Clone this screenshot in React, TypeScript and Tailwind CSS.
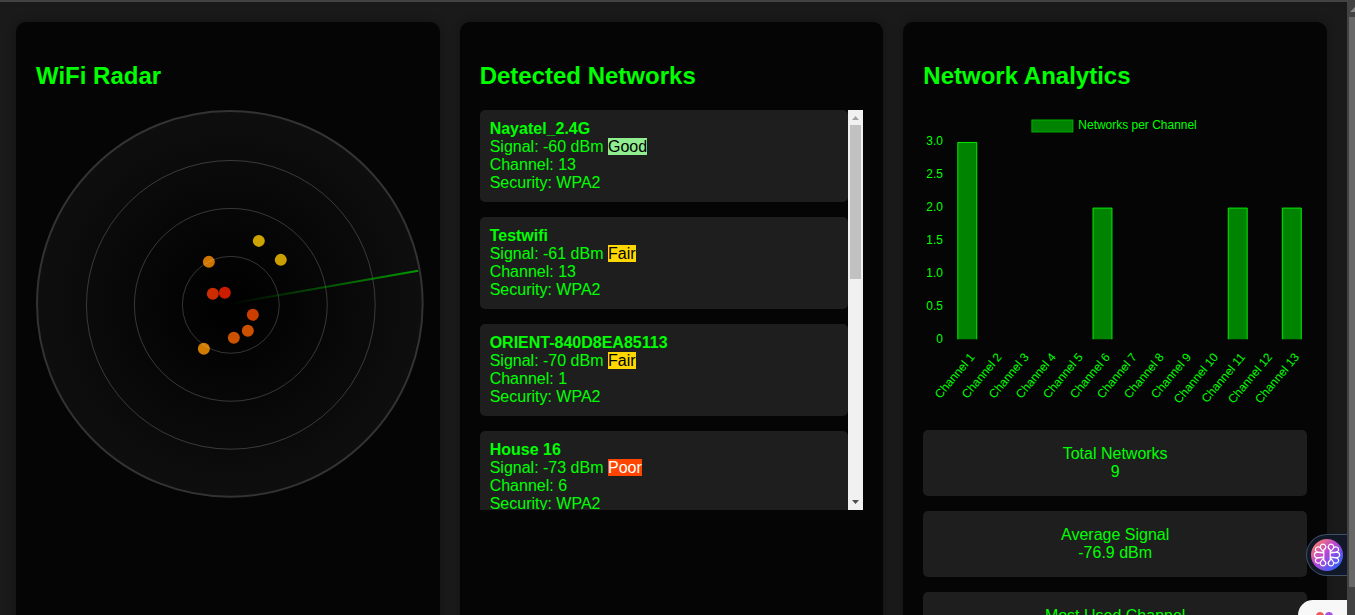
import React from "react";

type Network = {
  name: string;
  signal: number;
  quality: "Good" | "Fair" | "Poor";
  channel: number;
};

const networks: Network[] = [
  { name: "Nayatel_2.4G", signal: -60, quality: "Good", channel: 13 },
  { name: "Testwifi", signal: -61, quality: "Fair", channel: 13 },
  { name: "ORIENT-840D8EA85113", signal: -70, quality: "Fair", channel: 1 },
  { name: "House 16", signal: -73, quality: "Poor", channel: 6 },
];

const qualityClass = {
  Good: "bg-[#90ee90] text-black",
  Fair: "bg-[#ffd700] text-black",
  Poor: "bg-[#ff4500] text-white",
};

const blips = [
  { x: 223, y: 131, color: "#cca300" },
  { x: 245, y: 150, color: "#cc9f00" },
  { x: 173, y: 152, color: "#d07400" },
  { x: 177, y: 184, color: "#cc2d00" },
  { x: 189, y: 183, color: "#cc1c00" },
  { x: 217, y: 205, color: "#cc3d00" },
  { x: 212, y: 221, color: "#cc5000" },
  { x: 198, y: 228, color: "#cc5200" },
  { x: 168, y: 239, color: "#d07c00" },
];

const channelCounts = [3, 0, 0, 0, 0, 2, 0, 0, 0, 0, 2, 0, 2];
const yTicks = ["3.0", "2.5", "2.0", "1.5", "1.0", "0.5", "0"];

const stats = [
  { label: "Total Networks", value: "9" },
  { label: "Average Signal", value: "-76.9 dBm" },
  { label: "Most Used Channel", value: "1" },
];

function Panel({ title, children }: { title: string; children: React.ReactNode }) {
  return (
    <section className="min-w-0 rounded-[10px] bg-[#050505] p-5 shadow-[0_0_10px_rgba(0,0,0,0.3)]">
      <h2 className="my-5 text-2xl leading-7 font-bold">{title}</h2>
      {children}
    </section>
  );
}

function Radar() {
  return (
    <svg viewBox="0 0 388 388" className="block w-[calc(100%+4px)]" role="img" aria-label="WiFi Radar">
      <defs>
        <radialGradient id="dish">
          <stop offset="0" stopColor="#000000" />
          <stop offset="1" stopColor="#0e0e0e" />
        </radialGradient>
        <linearGradient id="sweep" gradientUnits="userSpaceOnUse" x1="194" y1="194" x2="382" y2="161">
          <stop offset="0" stopColor="#009900" stopOpacity="0" />
          <stop offset="1" stopColor="#009900" />
        </linearGradient>
      </defs>
      <circle cx="194" cy="194" r="193" fill="url(#dish)" stroke="#333333" strokeWidth="2" />
      {blips.map((b) => (
        <circle key={`${b.x}-${b.y}`} cx={b.x} cy={b.y} r="6" fill={b.color} />
      ))}
      {[48.5, 96.5, 144.5].map((r) => (
        <circle key={r} cx="195" cy="195" r={r} fill="none" stroke="#ffffff" strokeOpacity="0.2" />
      ))}
      <line x1="194" y1="194" x2="382.500" y2="161" stroke="url(#sweep)" strokeWidth="2" />
    </svg>
  );
}

function NetworkList() {
  return (
    <div className="flex h-[400px]">
      <ul className="min-w-0 flex-1 overflow-y-auto [scrollbar-width:none]">
        {networks.map((n) => (
          <li key={n.name} className="mb-[15px] rounded-[5px] bg-[#1e1e1e] p-2.5 leading-[18px]">
            <strong className="block">{n.name}</strong>
            <div>
              Signal: {n.signal} dBm <span className={qualityClass[n.quality]}>{n.quality}</span>
            </div>
            <div>Channel: {n.channel}</div>
            <div>Security: WPA2</div>
          </li>
        ))}
      </ul>
      <div className="flex w-[15px] flex-col items-center bg-[#f1f1f1]" aria-hidden="true">
        <svg viewBox="0 0 15 15" className="h-[15px] w-[15px] shrink-0">
          <path d="M4 10h7L7.500 6z" fill="#a3a3a3" />
        </svg>
        <div className="h-[154px] w-[11px] bg-[#c1c1c1]" />
        <svg viewBox="0 0 15 15" className="mt-auto h-[15px] w-[15px] shrink-0">
          <path d="M4 5h7L7.500 9z" fill="#505050" />
        </svg>
      </div>
    </div>
  );
}

function ChannelChart() {
  const center = (i: number) => 44.3 + i * 27.07;
  return (
    <svg
      viewBox="0 0 384 300"
      className="block w-full fill-[#00ff00] text-xs"
      role="img"
      aria-label="Networks per Channel"
    >
      <rect x="109" y="10" width="41" height="12" fill="#008300" stroke="#00b000" />
      <text x="155.500" y="19">Networks per Channel</text>
      {yTicks.map((t, i) => (
        <text key={t} x="20" y={35 + i * 33} textAnchor="end">
          {t}
        </text>
      ))}
      {channelCounts.map((count, i) => {
        const top = 229.5 - count * 65.67;
        const left = center(i) - 9.5;
        return (
          <g key={i}>
            {count > 0 && (
              <>
                <rect x={left} y={top} width="19" height={229.5 - top} fill="#008300" />
                <path
                  d={`M${left} 229.5V${top}H${left + 19}V229.5`}
                  fill="none"
                  stroke="#00ff00"
                  strokeWidth="1"
                  strokeOpacity="0.9"
                />
              </>
            )}
            <text
              textAnchor="end"
              transform={`translate(${center(i) + 5} 245) rotate(-50)`}
              y="4"
            >
              Channel {i + 1}
            </text>
          </g>
        );
      })}
    </svg>
  );
}

function FloatingTools() {
  return (
    <div className="absolute right-2 bottom-0 flex flex-col items-end">
      <button
        type="button"
        aria-label="Assistant"
        className="mb-6 flex h-[42px] w-[41px] items-center rounded-l-full border border-r-0 border-[#3f4f66] bg-[#111827] pl-1"
      >
        <svg viewBox="0 0 32 32" className="h-8 w-8 shrink-0">
          <defs>
            <linearGradient id="orb" x1="0.100" y1="0.100" x2="0.900" y2="0.900">
              <stop offset="0" stopColor="#fb7a6c" />
              <stop offset="0.450" stopColor="#b845d6" />
              <stop offset="1" stopColor="#2563ff" />
            </linearGradient>
          </defs>
          <circle cx="16" cy="16" r="16" fill="url(#orb)" />
          <g fill="none" stroke="#ffffff" strokeWidth="1.200" strokeLinejoin="round">
            {[1, -1].map((s) => (
              <g key={s} transform={`translate(16 16) scale(${s} 1)`}>
                <path d="M3.200-3V-5.200C1.200-6.500.9-8.300 1.600-9.500a2.700 2.700 0 0 1 4.800 0c.7 1.400.2 2.900-1 4.200L3.200-3v6l2.200 2.300c1.200 1.300 1.700 2.800 1 4.200a2.700 2.700 0 0 1-4.800 0C.9 8.300 1.200 6.500 3.200 5.200V3" />
                <path d="M6.600-7.500c2-1.300 4.400-.5 4.900 1.300.5 1.700-.6 2.900-2.300 3.300L5.400-2.200" />
                <path d="M6.600 7.500c2 1.300 4.400.5 4.900-1.300.5-1.700-.6-2.900-2.300-3.300L5.400 2.200" />
                <path d="M3.200-1.600 5.400-2.600H10a2.600 2.600 0 0 1 0 5.200H5.400L3.200 1.600" />
              </g>
            ))}
          </g>
        </svg>
      </button>
      <button
        type="button"
        aria-label="Extension"
        className="flex h-[15px] w-[49px] items-end overflow-hidden rounded-tl-[20px] bg-[#f8f8f8] pl-[18px]"
      >
        <svg viewBox="0 0 18 3" className="h-[3px] w-[18px]">
          <path d="M0 3Q1 0 4 0T8 3z" fill="#ee5a58" />
          <path d="M9 3Q10 0 13 0T17 3z" fill="#a94ce0" />
        </svg>
      </button>
    </div>
  );
}

function PageScrollbar() {
  return (
    <div className="flex w-2 shrink-0 flex-col bg-[#424242]" aria-hidden="true">
      <svg viewBox="0 0 8 15" className="h-[15px] w-2 shrink-0">
        <path d="M3 10 8 5v5z" fill="#8a8a8a" />
      </svg>
      <div className="mb-7 ml-0.5 flex-1 bg-[#686868]" />
    </div>
  );
}

export default function App() {
  return (
    <div className="relative flex h-screen overflow-hidden border-t-2 border-[#424242] bg-[#1a1a1a] font-['Liberation_Sans',Arial,sans-serif] text-base text-[#00ff00]">
      <main className="min-w-0 flex-1 overflow-y-auto [scrollbar-width:none]">
        <div className="grid grid-cols-3 gap-5 py-5 pr-5 pl-4">
          <Panel title="WiFi Radar">
            <Radar />
          </Panel>
          <Panel title="Detected Networks">
            <NetworkList />
          </Panel>
          <Panel title="Network Analytics">
            <ChannelChart />
            <dl className="mt-5 grid gap-[15px] text-center leading-[18px]">
              {stats.map((s) => (
                <div key={s.label} className="rounded-[5px] bg-[#1e1e1e] p-[15px]">
                  <dt>{s.label}</dt>
                  <dd>{s.value}</dd>
                </div>
              ))}
            </dl>
          </Panel>
        </div>
      </main>
      <PageScrollbar />
      <FloatingTools />
    </div>
  );
}
